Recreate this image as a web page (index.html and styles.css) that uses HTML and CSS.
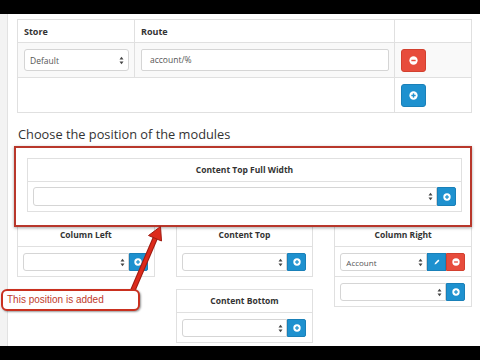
FILE: index.html
```html
<!DOCTYPE html>
<html>
<head>
<meta charset="utf-8">
<link rel="stylesheet" href="styles.css">
</head>
<body>
<div class="topbar"></div>
<div class="page">
  <div class="sidebar"></div>
  <div class="content">
    <table class="routes">
      <thead>
        <tr><th class="c-store">Store</th><th class="c-route">Route</th><th class="c-act"></th></tr>
      </thead>
      <tbody>
        <tr class="odd">
          <td><div class="select big"><span>Default</span><svg class="caret" viewBox="0 0 5 9" width="5" height="9"><polygon points="0.5,3.6 2.5,0.8 4.5,3.6" fill="#444"/><polygon points="0.5,5.4 2.5,8.2 4.5,5.4" fill="#444"/></svg></div></td>
          <td><div class="input">account/%</div></td>
          <td><span class="btn danger lg"><svg viewBox="0 0 10 10" width="9" height="9"><circle cx="5" cy="5" r="4.6" fill="#fff"/><rect x="2.6" y="4.2" width="4.8" height="1.6" fill="#e74c3c"/></svg></span></td>
        </tr>
        <tr>
          <td colspan="2"></td>
          <td><span class="btn primary lg"><svg viewBox="0 0 10 10" width="9" height="9"><circle cx="5" cy="5" r="4.6" fill="#fff"/><rect x="2.6" y="4.2" width="4.8" height="1.6" fill="#1e91cf"/><rect x="4.2" y="2.6" width="1.6" height="4.8" fill="#1e91cf"/></svg></span></td>
        </tr>
      </tbody>
    </table>

    <h3 class="legend">Choose the position of the modules</h3>

    <div class="highlight">
      <div class="panel">
        <div class="panel-head">Content Top Full Width</div>
        <div class="panel-body">
          <div class="group tall">
            <div class="select"><span></span><svg class="caret" viewBox="0 0 5 9" width="5" height="9"><polygon points="0.5,3.6 2.5,0.8 4.5,3.6" fill="#444"/><polygon points="0.5,5.4 2.5,8.2 4.5,5.4" fill="#444"/></svg></div>
            <span class="btn primary"><svg viewBox="0 0 10 10" width="8" height="8"><circle cx="5" cy="5" r="4.6" fill="#fff"/><rect x="2.6" y="4.2" width="4.8" height="1.6" fill="#1e91cf"/><rect x="4.2" y="2.6" width="1.6" height="4.8" fill="#1e91cf"/></svg></span>
          </div>
        </div>
      </div>
    </div>

    <div class="columns">
      <div class="col">
        <div class="panel">
          <div class="panel-head">Column Left</div>
          <div class="panel-body">
            <div class="group">
              <div class="select"><span></span><svg class="caret" viewBox="0 0 5 9" width="5" height="9"><polygon points="0.5,3.6 2.5,0.8 4.5,3.6" fill="#444"/><polygon points="0.5,5.4 2.5,8.2 4.5,5.4" fill="#444"/></svg></div>
              <span class="btn primary"><svg viewBox="0 0 10 10" width="8" height="8"><circle cx="5" cy="5" r="4.6" fill="#fff"/><rect x="2.6" y="4.2" width="4.8" height="1.6" fill="#1e91cf"/><rect x="4.2" y="2.6" width="1.6" height="4.8" fill="#1e91cf"/></svg></span>
            </div>
          </div>
        </div>
      </div>

      <div class="col stack">
        <div class="panel">
          <div class="panel-head">Content Top</div>
          <div class="panel-body">
            <div class="group">
              <div class="select"><span></span><svg class="caret" viewBox="0 0 5 9" width="5" height="9"><polygon points="0.5,3.6 2.5,0.8 4.5,3.6" fill="#444"/><polygon points="0.5,5.4 2.5,8.2 4.5,5.4" fill="#444"/></svg></div>
              <span class="btn primary"><svg viewBox="0 0 10 10" width="8" height="8"><circle cx="5" cy="5" r="4.6" fill="#fff"/><rect x="2.6" y="4.2" width="4.8" height="1.6" fill="#1e91cf"/><rect x="4.2" y="2.6" width="1.6" height="4.8" fill="#1e91cf"/></svg></span>
            </div>
          </div>
        </div>
        <div class="panel">
          <div class="panel-head">Content Bottom</div>
          <div class="panel-body">
            <div class="group">
              <div class="select"><span></span><svg class="caret" viewBox="0 0 5 9" width="5" height="9"><polygon points="0.5,3.6 2.5,0.8 4.5,3.6" fill="#444"/><polygon points="0.5,5.4 2.5,8.2 4.5,5.4" fill="#444"/></svg></div>
              <span class="btn primary"><svg viewBox="0 0 10 10" width="8" height="8"><circle cx="5" cy="5" r="4.6" fill="#fff"/><rect x="2.6" y="4.2" width="4.8" height="1.6" fill="#1e91cf"/><rect x="4.2" y="2.6" width="1.6" height="4.8" fill="#1e91cf"/></svg></span>
            </div>
          </div>
        </div>
      </div>

      <div class="col">
        <div class="panel">
          <div class="panel-head">Column Right</div>
          <div class="panel-body striped">
            <div class="group">
              <div class="select"><span>Account</span><svg class="caret" viewBox="0 0 5 9" width="5" height="9"><polygon points="0.5,3.6 2.5,0.8 4.5,3.6" fill="#444"/><polygon points="0.5,5.4 2.5,8.2 4.5,5.4" fill="#444"/></svg></div>
              <span class="btn primary"><svg viewBox="0 0 10 10" width="8" height="8"><path d="M2 8 L2.4 6.2 L6.6 2 L8 3.4 L3.8 7.6 Z" fill="#fff"/></svg></span>
              <span class="btn danger"><svg viewBox="0 0 10 10" width="8" height="8"><circle cx="5" cy="5" r="4.6" fill="#fff"/><rect x="2.6" y="4.2" width="4.8" height="1.6" fill="#e74c3c"/></svg></span>
            </div>
          </div>
          <div class="panel-body sep">
            <div class="group">
              <div class="select"><span></span><svg class="caret" viewBox="0 0 5 9" width="5" height="9"><polygon points="0.5,3.6 2.5,0.8 4.5,3.6" fill="#444"/><polygon points="0.5,5.4 2.5,8.2 4.5,5.4" fill="#444"/></svg></div>
              <span class="btn primary"><svg viewBox="0 0 10 10" width="8" height="8"><circle cx="5" cy="5" r="4.6" fill="#fff"/><rect x="2.6" y="4.2" width="4.8" height="1.6" fill="#1e91cf"/><rect x="4.2" y="2.6" width="1.6" height="4.8" fill="#1e91cf"/></svg></span>
            </div>
          </div>
        </div>
      </div>
    </div>
  </div>

  <svg class="arrow" viewBox="0 0 480 332" width="480" height="332">
    <line x1="133" y1="276" x2="155.5" y2="223.5" stroke="#9e1c12" stroke-width="5.5" stroke-linecap="round"/>
    <line x1="133" y1="276" x2="155.5" y2="223.5" stroke="#dd2a1b" stroke-width="3.2" stroke-linecap="round"/>
    <polygon points="160.5,212.5 161.5,227 148.5,221.5" fill="#dd2a1b" stroke="#9e1c12" stroke-width="1" stroke-linejoin="round"/>
  </svg>
  <div class="callout">This position is added</div>
</div>
<div class="bottombar"></div>
</body>
</html>
```

FILE: styles.css
```css
html, body {
  margin: 0;
  padding: 0;
}
body {
  width: 480px;
  height: 360px;
  overflow: hidden;
  background: #fff;
  font-family: "Open Sans", "DejaVu Sans", sans-serif;
  color: #333;
}
.topbar, .bottombar {
  height: 14px;
  background: #000;
}
.page {
  position: relative;
  display: flex;
  height: 332px;
  overflow: hidden;
}
.sidebar {
  flex: none;
  width: 7px;
  background: #f3f3f3;
  border-right: 1px solid #e2e2e2;
}
.content {
  flex: 1;
  min-width: 0;
  padding: 5px 8px 0 9px;
}

/* top table */
.routes {
  width: 100%;
  border-collapse: collapse;
  font-size: 9px;
}
.routes th, .routes td {
  border: 1px solid #e0e0e0;
  box-sizing: border-box;
}
.routes th {
  height: 23px;
  padding: 0 6px;
  text-align: left;
  font-weight: 700;
  color: #333;
}
.c-store { width: 117px; }
.c-route { width: 260px; }
.routes td {
  height: 35px;
  padding: 0 5px 0 6px;
  vertical-align: middle;
}
.routes tr.odd td {
  background: #f9f9f9;
}

.select {
  display: flex;
  align-items: center;
  justify-content: space-between;
  box-sizing: border-box;
  height: 18px;
  border: 1px solid #d5d5d5;
  border-radius: 3px;
  padding: 0 3px 0 5px;
  background: #fff;
  font-size: 8px;
  color: #555;
}
.select.big {
  height: 22px;
  font-size: 8.5px;
  padding: 0 4px 0 5px;
}
.caret {
  display: block;
  flex: none;
}
.input {
  box-sizing: border-box;
  height: 22px;
  line-height: 20px;
  border: 1px solid #d5d5d5;
  border-radius: 2px;
  padding: 0 8px;
  background: #fff;
  font-size: 8.5px;
  color: #555;
}

.btn {
  display: flex;
  align-items: center;
  justify-content: center;
  flex: none;
  box-sizing: border-box;
  width: 19px;
  height: 18px;
}
.btn svg { display: block; }
.btn.lg {
  width: 25px;
  height: 23px;
  border-radius: 3px;
}
.primary {
  background: #1e91cf;
  border: 1px solid #1a80b8;
}
.danger {
  background: #e74c3c;
  border: 1px solid #d2402f;
}

.legend {
  margin: 13px 0 4px 1px;
  font-size: 12.8px;
  line-height: 16px;
  font-weight: 400;
  color: #333;
}

.highlight {
  position: relative;
  z-index: 1;
  margin-left: -3px;
  padding: 10px 8px 13px 11px;
  border: 2px solid #b8372b;
  background: #fff;
  box-shadow: 0 1px 3px rgba(0, 0, 0, 0.35);
}

.panel {
  border: 1px solid #e0e0e0;
  background: #fff;
}
.panel-head {
  height: 22px;
  line-height: 22px;
  text-align: center;
  font-size: 8.5px;
  font-weight: 700;
  color: #333;
  border-bottom: 1px solid #e0e0e0;
}
.panel-body {
  padding: 6px 6px 5px 5px;
}
.panel-body.sep {
  border-top: 1px solid #e0e0e0;
}
.highlight .panel-body {
  padding: 5px 5px 5px 5px;
}
.group {
  display: flex;
}
.group .select {
  flex: 1;
  min-width: 0;
  border-radius: 3px 0 0 3px;
}
.group .btn:last-child {
  border-radius: 0 2px 2px 0;
}
.group.tall .select, .group.tall .btn {
  height: 19px;
}

.columns {
  display: grid;
  grid-template-columns: repeat(3, 1fr);
  column-gap: 21px;
  margin-top: -4px;
  align-items: start;
}
.stack {
  display: flex;
  flex-direction: column;
  gap: 12px;
}

.arrow {
  position: absolute;
  left: 0;
  top: 0;
  z-index: 3;
  pointer-events: none;
}
.callout {
  position: absolute;
  z-index: 4;
  left: 1px;
  top: 275px;
  box-sizing: border-box;
  width: 139px;
  height: 22px;
  padding: 0 4px;
  line-height: 18px;
  border: 2px solid #c9301f;
  border-radius: 6px;
  background: #fff;
  box-shadow: 1px 1px 2px rgba(0, 0, 0, 0.4);
  font-family: "Liberation Sans", Arial, sans-serif;
  font-size: 10px;
  color: #c0392b;
}
```
